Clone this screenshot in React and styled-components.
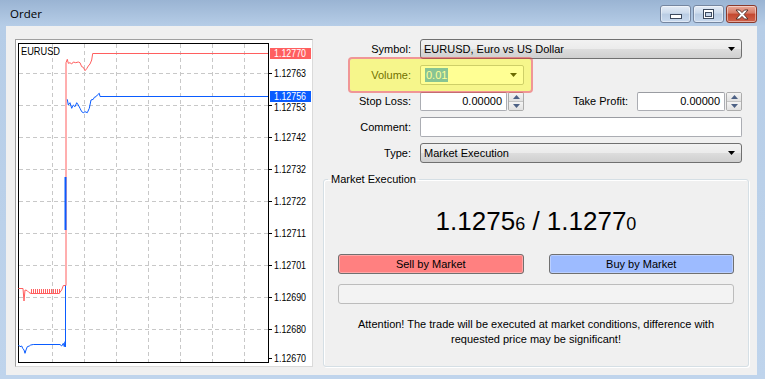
import React from "react";
import styled, { createGlobalStyle } from "styled-components";

const GlobalStyle = createGlobalStyle`
  html, body { margin: 0; padding: 0; }
  body {
    width: 765px; height: 379px; overflow: hidden;
    font-family: "Liberation Sans", Arial, sans-serif;
    font-size: 11px; color: #000;
  }
  * { box-sizing: border-box; }
`;

const Window = styled.div`
  width: 765px;
  height: 379px;
  display: flex;
  flex-direction: column;
  padding: 0 8px 5px 6px;
  background: linear-gradient(to bottom, #9ab4d3 0px, #b6cde7 26px, #bfd4ec 100%);
`;

const TitleBar = styled.div`
  height: 26px;
  display: flex;
  align-items: flex-start;
  flex-shrink: 0;
`;

const Title = styled.div`
  font-family: "Open Sans", "Noto Sans", sans-serif;
  font-size: 11.5px;
  padding: 6px 0 0 4px;
  color: #000;
`;

const Controls = styled.div`
  margin-left: auto;
  margin-top: 5px;
  display: flex;
  gap: 2px;
`;

const CtrlBtn = styled.div`
  width: 31px;
  height: 18px;
  border-radius: 3px;
  display: flex;
  align-items: center;
  justify-content: center;
  border: 1px solid ${(p) => (p.$close ? "#8a3a2c" : "#7586a0")};
  background: ${(p) =>
    p.$close
      ? "linear-gradient(to bottom, #e9a897 0%, #d67a66 45%, #c4472f 50%, #d0624b 100%)"
      : "linear-gradient(to bottom, #e4ecf6 0%, #cbdaec 45%, #b9cce3 50%, #c8d9ee 100%)"};
  box-shadow: inset 0 0 0 1px rgba(255, 255, 255, 0.45);
`;

const Client = styled.div`
  flex: 1;
  background: #f0f0f0;
  display: flex;
  padding: 13px 0 8px 9px;
`;

const ChartPanel = styled.div`
  width: 298px;
  background: #fff;
  border-style: solid;
  border-width: 1px;
  border-color: #a0a0a0 #dadada #dadada #a0a0a0;
  overflow: hidden;
`;

const FormCol = styled.div`
  position: relative;
  margin-left: 10px;
  width: 426px;
  display: flex;
  flex-direction: column;
`;

const Fields = styled.div`
  display: flex;
  flex-direction: column;
  gap: 6px;
  padding-right: 7px;
`;

const Row = styled.div`
  display: flex;
  align-items: center;
  height: 20px;
`;

const Label = styled.div`
  width: ${(p) => p.$w}px;
  flex-shrink: 0;
  text-align: right;
  margin-right: 9px;
  white-space: nowrap;
`;

const Select = styled.div`
  flex: 1;
  height: 20px;
  border: 1px solid #707070;
  border-radius: 3px;
  background: linear-gradient(to bottom, #f2f2f2 0%, #ebebeb 50%, #dddddd 51%, #cfcfcf 100%);
  display: flex;
  align-items: center;
  padding: 0 5px 0 3px;
  justify-content: space-between;
`;

const Combo = styled.div`
  width: 104px;
  height: 20px;
  background: #fff;
  border: 1px solid #abadb3;
  border-radius: 2px;
  display: flex;
  align-items: center;
  padding: 0 5px 0 4px;
  justify-content: space-between;
`;

const Selected = styled.span`
  background: #3399ff;
  color: #fff;
  padding: 0 1px;
  line-height: 14px;
`;

const SpinField = styled.div`
  width: ${(p) => p.$w}px;
  height: 19px;
  display: flex;
  gap: 1px;
`;

const TextBox = styled.div`
  flex: 1;
  height: ${(p) => (p.$tall ? 20 : 19)}px;
  background: #fff;
  border: 1px solid #abadb3;
  border-top-color: #9a9ca2;
  border-radius: 2px;
  display: flex;
  align-items: center;
  justify-content: flex-end;
  padding-right: 4px;
`;

const SpinBox = styled.div`
  width: 16px;
  display: flex;
  flex-direction: column;
  border: 1px solid #acacac;
  border-radius: 2px;
  overflow: hidden;
`;

const SpinBtn = styled.div`
  flex: 1;
  display: flex;
  align-items: center;
  justify-content: center;
  background: linear-gradient(to bottom, #f4f4f4, #e1e1e1);
  border-top: ${(p) => (p.$down ? "1px solid #c4c4c4" : "none")};
`;

const Highlight = styled.div`
  position: absolute;
  left: 25px;
  top: 18px;
  width: 185px;
  height: 36px;
  border: 2px solid rgba(240, 60, 60, 0.5);
  border-radius: 4px;
  background: rgba(255, 255, 0, 0.42);
  background-clip: padding-box;
  pointer-events: none;
`;

const Group = styled.fieldset`
  margin: 10px 0 0 0;
  flex: 1;
  border: 1px solid #d5dfe5;
  border-radius: 3px;
  padding: 0 14px;
  min-width: 0;
  display: flex;
  flex-direction: column;
  box-shadow: inset 1px 1px 0 #fff, 1px 1px 0 #fff;
`;

const Legend = styled.legend`
  padding: 0 3px;
  margin-left: -10px;
  line-height: 13px;
`;

const Price = styled.div`
  margin-top: 20px;
  height: 30px;
  line-height: 30px;
  text-align: center;
  font-size: 26px;
  white-space: nowrap;
`;

const Small = styled.span`
  font-size: 18px;
`;

const Buttons = styled.div`
  margin-top: 18px;
  display: grid;
  grid-template-columns: 1fr 1fr;
  gap: 25px;
`;

const TradeBtn = styled.div`
  height: 20px;
  border: 1px solid #707070;
  border-radius: 3px;
  background: ${(p) => p.$bg};
  box-shadow: inset 0 0 0 1px rgba(255, 255, 255, 0.3);
  display: flex;
  align-items: center;
  justify-content: center;
`;

const Progress = styled.div`
  margin-top: 10px;
  height: 20px;
  border: 1px solid #bcbcbc;
  border-radius: 3px;
  background: #f3f3f3;
`;

const Notice = styled.div`
  margin-top: 13px;
  text-align: center;
  line-height: 14.5px;
  white-space: nowrap;
`;

const Arrow = () => (
  <svg width="8" height="4" viewBox="0 0 8 4">
    <path d="M0 0 L7 0 L3.5 4 Z" fill="#000" />
  </svg>
);

const SpinArrow = ({ down }) => (
  <svg width="7" height="4" viewBox="0 0 7 4">
    <path d={down ? "M0 0 L7 0 L3.5 4 Z" : "M0 4 L7 4 L3.5 0 Z"} fill="#4d6185" />
  </svg>
);

const Spin = ({ w, value }) => (
  <SpinField $w={w}>
    <TextBox>{value}</TextBox>
    <SpinBox>
      <SpinBtn>
        <SpinArrow />
      </SpinBtn>
      <SpinBtn $down>
        <SpinArrow down />
      </SpinBtn>
    </SpinBox>
  </SpinField>
);

const RED = "#ff5f5f";
const BLUE = "#0a5cff";

const hGrid = [73, 105, 137, 169, 201, 233, 265, 297, 329];
const vGrid = [52, 84, 116, 148, 180, 212, 244];
const scale = [
  ["1.12763", 73, 4],
  ["1.12753", 105, 5.5],
  ["1.12742", 137, 4],
  ["1.12732", 169, 4],
  ["1.12722", 201, 4],
  ["1.12711", 233, 4],
  ["1.12701", 265, 4],
  ["1.12690", 297, 4],
  ["1.12680", 329, 4],
  ["1.12670", 358, 4],
];

const redTop =
  "M66,285.5 L66,62.7 L67.3,59.3 L68.3,63.3 L70,62.7 L71.7,64 L73.3,62 L75.7,62.7 L78.3,62 L80,62.7 L81.7,66.7 L83.3,67.3 L85,70.7 L86.7,68.7 L88.3,66 L90,64 L91.7,60 L92.7,53.5 L268,53.5";
let comb = "";
for (let x = 31; x <= 59; x += 2) comb += `M${x + 0.5},289 L${x + 0.5},293.5 `;
const redBottom =
  "M18.5,288.5 L23,288.5 L24,301 L25,290 L27,290.5 L29,292.5 L31,293.5 L59,293.5 L61.7,290 L63.3,285.5 L66,285.5";
const blueTop =
  "M67.3,99.3 L68.3,105 L70,102.7 L71.7,108.3 L73.3,105 L75,106.7 L76.7,102.7 L78.3,105 L80,108.3 L81.7,111.7 L83.3,112.7 L85,111.7 L87.3,112.7 L89.3,108.3 L91,100 L93.3,99.3 L94.3,97.3 L96,96.7 L97.3,95 L99.3,93.3 L100,96.5 L268,96.5";
const blueBottom =
  "M65.5,285.7 L65.5,347 L65,341.7 L64.3,346.7 L63.3,343.3 L61.7,346 L60,344.5 L33.3,344.5 L30.7,345 L29.3,346 L27.3,346.7 L26,350 L25,353.3 L24,350 L22.7,348.3 L21.7,346 L20,346.7 L18.5,345";

const Chart = () => (
  <svg width="296" height="326" viewBox="16 40 296 326" style={{ display: "block" }}>
    <g stroke="#c8c8c8" strokeDasharray="4 3" strokeWidth="1" shapeRendering="crispEdges">
      {hGrid.map((y) => (
        <line key={"h" + y} x1="19" x2="268" y1={y + 0.5} y2={y + 0.5} />
      ))}
      {vGrid.map((x) => (
        <line key={"v" + x} x1={x + 0.5} x2={x + 0.5} y1="44" y2="362" />
      ))}
    </g>
    <rect x="18.5" y="43.5" width="250" height="319" fill="none" stroke="#000" strokeWidth="1" shapeRendering="crispEdges" />
    <g stroke="#000" shapeRendering="crispEdges">
      {scale.map(([, y]) => (
        <line key={"t" + y} x1="268" x2="272" y1={y + 0.5} y2={y + 0.5} />
      ))}
    </g>
    <g fontFamily="Liberation Sans, Arial, sans-serif" fontSize="10" fill="#000">
      {scale.map(([v, y, d]) => (
        <text key={v} x="274" y={y + d} textLength="32" lengthAdjust="spacingAndGlyphs">
          {v}
        </text>
      ))}
      <text x="21" y="54.5" textLength="39" lengthAdjust="spacingAndGlyphs">
        EURUSD
      </text>
    </g>
    <g fill="none" strokeWidth="1" strokeLinejoin="miter">
      <path d={redTop} stroke={RED} />
      <path d={redBottom} stroke={RED} />
      <path d={comb} stroke={RED} />
      <path d={blueTop} stroke={BLUE} />
      <path d={blueBottom} stroke={BLUE} />
      <line x1="65.5" x2="65.5" y1="177" y2="230" stroke={BLUE} strokeWidth="2" />
    </g>
    <rect x="270" y="48" width="41" height="11" fill={RED} />
    <rect x="270" y="91" width="41" height="11" fill={BLUE} />
    <g fontFamily="Liberation Sans, Arial, sans-serif" fontSize="10" fill="#fff">
      <text x="274" y="57" textLength="32" lengthAdjust="spacingAndGlyphs">1.12770</text>
      <text x="274" y="100" textLength="32" lengthAdjust="spacingAndGlyphs">1.12756</text>
    </g>
  </svg>
);

const MinIcon = () => (
  <svg width="12" height="12" viewBox="0 0 12 12">
    <rect x="0.5" y="6.5" width="11" height="4" fill="#fff" stroke="#3d4a5e" />
  </svg>
);
const MaxIcon = () => (
  <svg width="11" height="10" viewBox="0 0 11 10">
    <rect x="0.5" y="0.5" width="10" height="9" fill="#fff" stroke="#3d4a5e" />
    <rect x="2.5" y="3.5" width="6" height="4" fill="#c5d5ea" stroke="#3d4a5e" />
  </svg>
);
const CloseIcon = () => (
  <svg width="14" height="11" viewBox="0 0 14 11">
    <path
      d="M1 1 L4.5 1 L7 3.6 L9.5 1 L13 1 L9 5.5 L13 10 L9.5 10 L7 7.4 L4.5 10 L1 10 L5 5.5 Z"
      fill="#fff"
      stroke="#4a2a25"
      strokeWidth="0.9"
      strokeLinejoin="round"
    />
  </svg>
);

export default function App() {
  return (
    <>
      <GlobalStyle />
      <Window>
        <TitleBar>
          <Title>Order</Title>
          <Controls>
            <CtrlBtn>
              <MinIcon />
            </CtrlBtn>
            <CtrlBtn>
              <MaxIcon />
            </CtrlBtn>
            <CtrlBtn $close>
              <CloseIcon />
            </CtrlBtn>
          </Controls>
        </TitleBar>
        <Client>
          <ChartPanel>
            <Chart />
          </ChartPanel>
          <FormCol>
            <Fields>
              <Row>
                <Label $w={88}>Symbol:</Label>
                <Select>
                  <span>EURUSD, Euro vs US Dollar</span>
                  <Arrow />
                </Select>
              </Row>
              <Row>
                <Label $w={88}>Volume:</Label>
                <Combo>
                  <Selected>0.01</Selected>
                  <Arrow />
                </Combo>
              </Row>
              <Row>
                <Label $w={88}>Stop Loss:</Label>
                <Spin w={104} value="0.00000" />
                <Label $w={104}>Take Profit:</Label>
                <Spin w={105} value="0.00000" />
              </Row>
              <Row>
                <Label $w={88}>Comment:</Label>
                <TextBox $tall />
              </Row>
              <Row>
                <Label $w={88}>Type:</Label>
                <Select>
                  <span>Market Execution</span>
                  <Arrow />
                </Select>
              </Row>
            </Fields>
            <Highlight />
            <Group>
              <Legend>Market Execution</Legend>
              <Price>
                1.1275<Small>6</Small> / 1.1277<Small>0</Small>
              </Price>
              <Buttons>
                <TradeBtn $bg="#ff8080">Sell by Market</TradeBtn>
                <TradeBtn $bg="#9dbbff">Buy by Market</TradeBtn>
              </Buttons>
              <Progress />
              <Notice>
                Attention! The trade will be executed at market conditions, difference with
                <br />
                requested price may be significant!
              </Notice>
            </Group>
          </FormCol>
        </Client>
      </Window>
    </>
  );
}
